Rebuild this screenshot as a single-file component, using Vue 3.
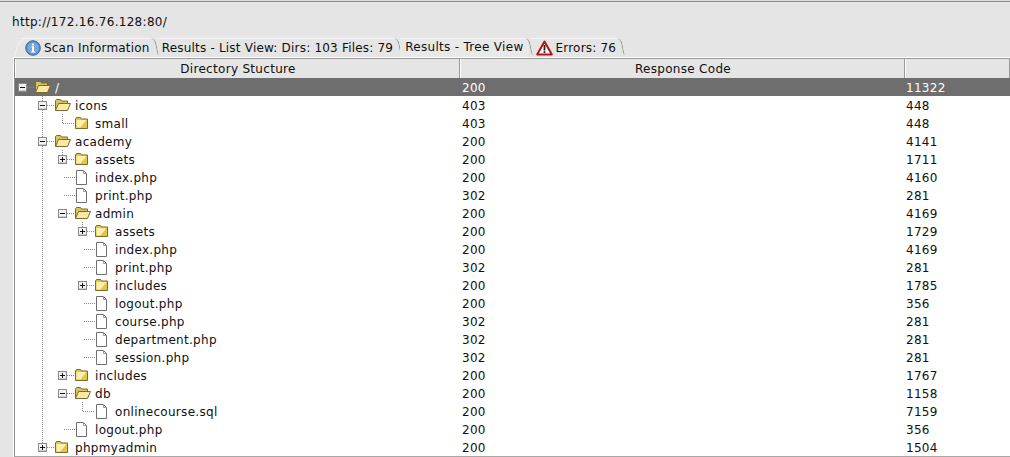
<template>
  <div class="window">
    <div class="url">http://172.16.76.128:80/</div>

    <div class="tabs">
      <div v-for="t in tabs" :key="t.label" class="tab" :class="[t.cls, { active: t.active }]">
        <svg v-if="t.icon === 'info'" class="tab-icon" width="16" height="16" viewBox="0 0 16 16">
          <circle cx="8" cy="8" r="7.3" fill="#5b8fc7" stroke="#3f6d9f" />
          <circle cx="8" cy="8" r="5.6" fill="#7aa8d8" />
          <rect x="7" y="3.5" width="2" height="2" fill="#fff" />
          <rect x="6.5" y="6.5" width="2.5" height="1" fill="#fff" />
          <rect x="7" y="6.5" width="2" height="5.5" fill="#fff" />
          <rect x="6" y="11.5" width="4" height="1" fill="#fff" />
        </svg>
        <svg v-if="t.icon === 'warn'" class="tab-icon" width="17" height="16" viewBox="0 0 17 16">
          <path d="M8.5 1.5 L15.8 14.5 H1.2 Z" fill="#fff" stroke="#b0141c" stroke-width="2" stroke-linejoin="round" />
          <rect x="7.6" y="5" width="1.8" height="5.5" fill="#222" />
          <rect x="7.6" y="11.2" width="1.8" height="1.8" fill="#222" />
        </svg>
        <span>{{ t.label }}</span>
      </div>
    </div>

    <div class="table">
      <div class="row head">
        <div class="cell c1">Directory Stucture</div>
        <div class="cell c2">Response Code</div>
        <div class="cell c3"></div>
      </div>

      <div v-for="(r, i) in rows" :key="i" class="row" :class="{ selected: i === 0 }">
        <div class="cell c1 name">
          <svg class="gutter" :width="gutterWidth(r)" height="18">
            <!-- trunk below root, stops at the last top level node -->
            <line v-if="i > 0" x1="27.5" y1="0" x2="27.5" :y2="i === rows.length - 1 ? 9 : 18" class="dots" />
            <line v-if="r.first" :x1="elbowX(r)" y1="0" :x2="elbowX(r)" y2="9" class="dots" />
            <line :x1="r.kind === 'file' && !r.first ? elbowX(r) + 1 : elbowX(r)" y1="9.5" :x2="iconX(r)" y2="9.5" class="dots" />

            <g v-if="r.kind === 'dir'" :transform="`translate(${elbowX(r) - 4.5} 5)`">
              <rect x="0.5" y="0.5" width="8" height="8" fill="#f2f2f2" stroke="#8a8a8a" />
              <rect x="1" y="7" width="7" height="1" fill="#cfcfcf" />
              <rect x="2" y="4" width="5" height="1" fill="#111" />
              <rect v-if="!r.open" x="4" y="2" width="1" height="5" fill="#111" />
            </g>

            <g :transform="`translate(${iconX(r)} 2)`">
              <template v-if="r.kind === 'file'">
                <path d="M1.5 0.5 H8.5 L11.5 3.5 V14.5 H1.5 Z" fill="#fff" stroke="#6f6f6f" />
                <path d="M8.5 0.5 V3.5 H11.5" fill="none" stroke="#9a9a9a" />
              </template>
              <template v-else-if="r.open">
                <path d="M0.5 12.5 V2.5 L1.5 1.5 H5.5 L6.5 3 H12.5 V6" fill="#dcc25e" stroke="#7d6a2c" />
                <path d="M0.5 12.5 L3.5 5.5 H15.5 L12.5 12.5 Z" fill="#f8e9a6" stroke="#7d6a2c" />
              </template>
              <template v-else>
                <path d="M0.5 3 L1.5 1.5 H5.5 L6.5 3 H12.5 V12.5 H0.5 Z" fill="#e4c545" stroke="#7d6a2c" />
                <path d="M1.5 4 H11.5 L5.5 11.5 H1.5 Z" fill="#fbf0ae" />
              </template>
            </g>
          </svg>
          <span class="label">{{ r.name }}</span>
        </div>
        <div class="cell c2">{{ r.code }}</div>
        <div class="cell c3">{{ r.size }}</div>
      </div>
    </div>
  </div>
</template>

<script setup>
const tabs = [
  { label: 'Scan Information', icon: 'info', cls: 'first' },
  { label: 'Results - List View: Dirs: 103 Files: 79' },
  { label: 'Results - Tree View', active: true },
  { label: 'Errors: 76', icon: 'warn' }
]

const rows = [
  { name: '/', depth: 0, kind: 'dir', open: true, code: 200, size: 11322 },
  { name: 'icons', depth: 1, kind: 'dir', open: true, code: 403, size: 448 },
  { name: 'small', depth: 2, kind: 'leafdir', first: true, code: 403, size: 448 },
  { name: 'academy', depth: 1, kind: 'dir', open: true, code: 200, size: 4141 },
  { name: 'assets', depth: 2, kind: 'dir', first: true, code: 200, size: 1711 },
  { name: 'index.php', depth: 2, kind: 'file', code: 200, size: 4160 },
  { name: 'print.php', depth: 2, kind: 'file', code: 302, size: 281 },
  { name: 'admin', depth: 2, kind: 'dir', open: true, code: 200, size: 4169 },
  { name: 'assets', depth: 3, kind: 'dir', first: true, code: 200, size: 1729 },
  { name: 'index.php', depth: 3, kind: 'file', code: 200, size: 4169 },
  { name: 'print.php', depth: 3, kind: 'file', code: 302, size: 281 },
  { name: 'includes', depth: 3, kind: 'dir', code: 200, size: 1785 },
  { name: 'logout.php', depth: 3, kind: 'file', code: 200, size: 356 },
  { name: 'course.php', depth: 3, kind: 'file', code: 302, size: 281 },
  { name: 'department.php', depth: 3, kind: 'file', code: 302, size: 281 },
  { name: 'session.php', depth: 3, kind: 'file', code: 302, size: 281 },
  { name: 'includes', depth: 2, kind: 'dir', code: 200, size: 1767 },
  { name: 'db', depth: 2, kind: 'dir', open: true, code: 200, size: 1158 },
  { name: 'onlinecourse.sql', depth: 3, kind: 'file', first: true, code: 200, size: 7159 },
  { name: 'logout.php', depth: 2, kind: 'file', code: 200, size: 356 },
  { name: 'phpmyadmin', depth: 1, kind: 'dir', code: 200, size: 1504 }
]

// gutter starts at the table's inner left edge, levels are 20px apart
const elbowX = (r) => 7.5 + r.depth * 20
const iconX = (r) => 20 + r.depth * 20
const gutterWidth = (r) => 40 + r.depth * 20
</script>

<style scoped>
.window {
  width: 1010px;
  height: 457px;
  overflow: hidden;
  box-sizing: border-box;
  border-top: 1px solid #dcdcdc;
  background: #e5e5e5;
  font: 12px/18px "DejaVu Sans", sans-serif;
  letter-spacing: 0.3px;
  color: #101010;
}

.url {
  height: 36px;
  padding: 11px 0 0 12px;
  box-sizing: border-box;
  border-top: 1px solid #8c8c8c;
}

.tabs {
  display: flex;
  align-items: flex-end;
  height: 20px;
  padding-left: 20px;
  letter-spacing: 0.2px;
}

/* right edge of each tab is a slanted hairline */
.tab {
  position: relative;
  display: flex;
  align-items: center;
  gap: 3px;
  height: 18px;
  padding: 0 4px 0 5px;
  border-top: 1px solid #f4f4f4;
  white-space: nowrap;
  margin-right: 3px;
}

.tab::after {
  content: "";
  position: absolute;
  right: -3px;
  top: -1px;
  bottom: 2px;
  width: 3px;
  border-right: 1px solid #8f8f8f;
  border-top-right-radius: 6px 10px;
  transform: skewX(12deg);
}

.tab.first::before {
  content: "";
  position: absolute;
  left: -4px;
  top: 0;
  bottom: 0;
  width: 5px;
  border-left: 1px solid #f4f4f4;
  border-top: 1px solid #f4f4f4;
  border-top-left-radius: 6px 10px;
  transform: skewX(-14deg);
}

.tab.active {
  height: 19px;
  padding-bottom: 2px;
  box-sizing: border-box;
  background: #e9e9e9;
  letter-spacing: 0.3px;
}

.tab-icon {
  flex: none;
}

.table {
  margin-left: 13px;
  border-left: 1px solid #fff;
  border-top: 1px solid #fff;
  background: #fff;
}

.row {
  display: flex;
  height: 18px;
}

.head {
  height: 20px;
  background: #e5e5e5;
  border-top: 1px solid #9a9a9a;
  border-left: 1px solid #8f8f8f;
  box-sizing: border-box;
}

.head .cell {
  text-align: center;
  line-height: 21px;
  border-right: 1px solid #999;
  box-shadow: inset 1px 0 #fff;
}

.head .c1 {
  padding-left: 2px;
}

.selected {
  background: #6e6e6e;
  color: #fff;
}

.row:not(.head) {
  border-left: 1px solid #8f8f8f;
}

.row:last-child {
  height: 19px;
  box-sizing: border-box;
  border-bottom: 1px solid #a8a8a8;
}

.cell {
  box-sizing: border-box;
  padding-left: 2px;
  white-space: nowrap;
  line-height: 20px;
}

.c1 {
  width: 445px;
  flex: none;
  padding-left: 0;
}

.c2 {
  width: 445px;
  flex: none;
}

.c3 {
  flex: 1;
  padding-left: 1px;
}

.name {
  display: flex;
}

.gutter {
  flex: none;
}

.dots {
  stroke: #888;
  stroke-dasharray: 1 1;
  shape-rendering: crispEdges;
}
</style>

<style>
html, body {
  margin: 0;
  overflow: hidden;
}
</style>
